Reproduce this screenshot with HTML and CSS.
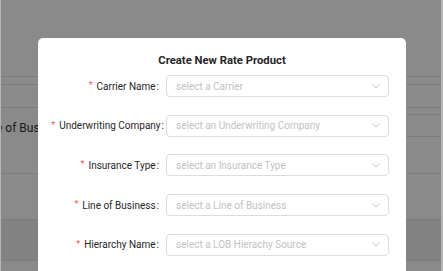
FILE: index.html
```html
<!DOCTYPE html>
<html lang="en">
<head>
<meta charset="utf-8">
<title>Create New Rate Product</title>
<link rel="stylesheet" href="styles.css">
</head>
<body>
<div class="screen">
  <div class="page">
    <div class="row r-top"></div>
    <div class="row r-a"></div>
    <div class="row r-b"></div>
    <div class="row r-c">
      <div class="cell-left"><span class="bg-text">Line of Business</span></div>
      <div class="cell-right">
        <div class="sub s1"></div>
        <div class="sub s2"></div>
        <div class="sub s3"></div>
      </div>
    </div>
    <div class="row r-d"></div>
    <div class="row r-e shaded"></div>
    <div class="row r-f"></div>
  </div>
  <div class="overlay"></div>
  <div class="modal">
    <h1 class="modal-title">Create New Rate Product</h1>
    <form class="form">
      <div class="form-row">
        <label class="form-label"><span class="req">*</span>Carrier Name<span class="colon">:</span></label>
        <div class="select"><span class="placeholder">select a Carrier</span><svg class="chev" viewBox="0 0 8 5"><path d="M0.5 0.5 L4 4 L7.5 0.5" /></svg></div>
      </div>
      <div class="form-row">
        <label class="form-label tight"><span class="req">*</span>Underwriting Company<span class="colon">:</span></label>
        <div class="select"><span class="placeholder">select an Underwriting Company</span><svg class="chev" viewBox="0 0 8 5"><path d="M0.5 0.5 L4 4 L7.5 0.5" /></svg></div>
      </div>
      <div class="form-row">
        <label class="form-label"><span class="req">*</span>Insurance Type<span class="colon">:</span></label>
        <div class="select"><span class="placeholder">select an Insurance Type</span><svg class="chev" viewBox="0 0 8 5"><path d="M0.5 0.5 L4 4 L7.5 0.5" /></svg></div>
      </div>
      <div class="form-row">
        <label class="form-label"><span class="req">*</span>Line of Business<span class="colon">:</span></label>
        <div class="select"><span class="placeholder">select a Line of Business</span><svg class="chev" viewBox="0 0 8 5"><path d="M0.5 0.5 L4 4 L7.5 0.5" /></svg></div>
      </div>
      <div class="form-row">
        <label class="form-label"><span class="req">*</span>Hierarchy Name<span class="colon">:</span></label>
        <div class="select"><span class="placeholder">select a LOB Hierachy Source</span><svg class="chev" viewBox="0 0 8 5"><path d="M0.5 0.5 L4 4 L7.5 0.5" /></svg></div>
      </div>
    </form>
  </div>
</div>
</body>
</html>
```
FILE: styles.css
```css
* { box-sizing: border-box; }
html, body { margin: 0; padding: 0; }
body {
  background: #b6b6b6;
  font-family: Roboto, "Liberation Sans", Arial, sans-serif;
  width: 443px;
  height: 271px;
  overflow: hidden;
}
.screen {
  position: relative;
  height: 271px;
  margin: 0 2px 0 1px;
  overflow: hidden;
  background: #fff;
}
.page { display: flex; flex-direction: column; }
.row { border-bottom: 1px solid #e6e6e6; }
.r-top { height: 77px; }
.r-a { height: 8px; }
.r-b { height: 23px; }
.r-c { height: 66px; display: flex; }
.cell-left {
  width: 37px;
  flex: none;
  display: flex;
  align-items: flex-start;
  padding-top: 13px;
  overflow: hidden;
}
.bg-text {
  font-size: 12px;
  line-height: 15px;
  color: #333;
  white-space: nowrap;
  margin-left: -21px;
}
.cell-right { flex: 1; display: flex; flex-direction: column; margin-left: 23px; }
.sub { border-bottom: 1px solid #e6e6e6; }
.s1 { height: 7px; }
.s2 { height: 22px; }
.s3 { border-bottom: 0; flex: 1; }
.r-d { height: 46px; }
.r-e { height: 41px; }
.shaded { background: #f1f1f1; }
.r-f { flex: 1; border-bottom: 0; }
.overlay {
  position: absolute;
  inset: 0;
  background: rgba(0, 0, 0, 0.46);
}
.modal {
  position: absolute;
  left: 37px;
  top: 38px;
  width: 368px;
  height: 260px;
  background: #fff;
  border-radius: 5px;
  padding: 15px 17px 0 0;
}
.modal-title {
  margin: 0;
  text-align: center;
  font-size: 11.3px;
  line-height: 16px;
  font-weight: 700;
  color: #262626;
  padding-left: 17px;
}
.form {
  margin-top: 6px;
  display: flex;
  flex-direction: column;
  gap: 17.7px;
}
.form-row { display: flex; align-items: center; height: 22px; }
.form-label {
  width: 128px;
  flex: none;
  display: flex;
  justify-content: flex-end;
  align-items: center;
  font-size: 10px;
  color: #262626;
  white-space: nowrap;
}
.req {
  color: #ff4d4f;
  font-size: 9px;
  margin-right: 4px;
  position: relative;
  top: -1px;
}
.colon { margin: 0 7px 0 1px; }
.tight .colon { margin: 0 2px 0 1px; }
.select {
  width: 223px;
  height: 22px;
  border: 1px solid #dcdcdc;
  border-radius: 4px;
  display: flex;
  align-items: center;
  justify-content: space-between;
  padding: 0 8px 0 9px;
}
.placeholder { font-size: 10px; color: #c2c2c2; white-space: nowrap; }
.chev { width: 8px; height: 5px; }
.chev path { fill: none; stroke: #c4c4c4; stroke-width: 1; }
```
